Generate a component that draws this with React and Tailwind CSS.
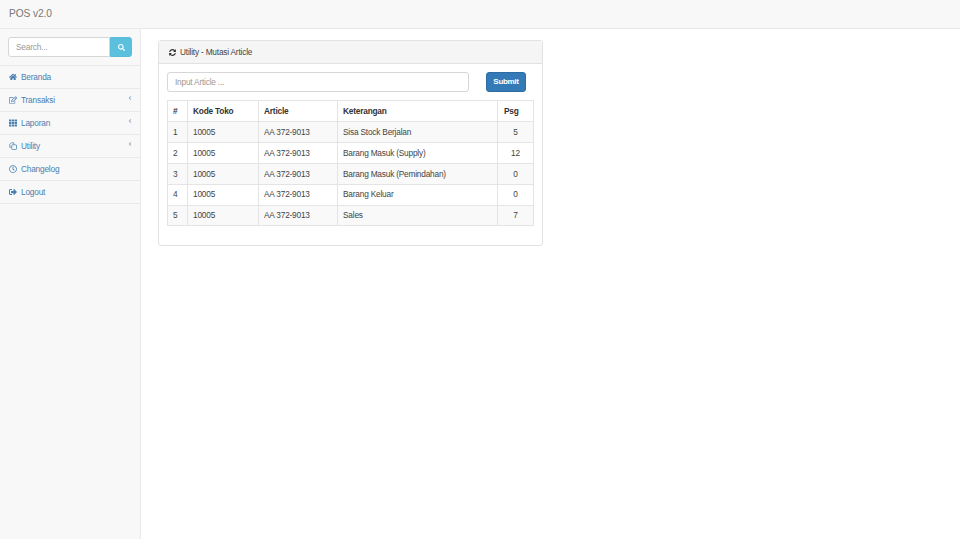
import { FaHome, FaRegEdit, FaTh, FaRegClock, FaSignOutAlt, FaSyncAlt, FaSearch, FaAngleLeft } from 'react-icons/fa';

function UtilityIcon({ className }) {
  return (
    <svg viewBox="0 0 16 16" fill="none" stroke="currentColor" strokeWidth="1.5" className={className}>
      <path d="M5 1.5 1.5 5v5.5H5" strokeLinejoin="round" />
      <path d="M5 1.5h4.5v3.5" strokeLinejoin="round" />
      <rect x="5.5" y="5.5" width="9.5" height="9.5" rx="1.5" />
    </svg>
  );
}

const menu = [
  { label: 'Beranda', icon: FaHome },
  { label: 'Transaksi', icon: FaRegEdit, sub: true },
  { label: 'Laporan', icon: FaTh, sub: true },
  { label: 'Utility', icon: UtilityIcon, sub: true },
  { label: 'Changelog', icon: FaRegClock },
  { label: 'Logout', icon: FaSignOutAlt },
];

const rows = [
  { no: 1, toko: '10005', article: 'AA 372-9013', ket: 'Sisa Stock Berjalan', psg: 5 },
  { no: 2, toko: '10005', article: 'AA 372-9013', ket: 'Barang Masuk (Supply)', psg: 12 },
  { no: 3, toko: '10005', article: 'AA 372-9013', ket: 'Barang Masuk (Pemindahan)', psg: 0 },
  { no: 4, toko: '10005', article: 'AA 372-9013', ket: 'Barang Keluar', psg: 0 },
  { no: 5, toko: '10005', article: 'AA 372-9013', ket: 'Sales', psg: 7 },
];

export default function App() {
  return (
    <div className="h-[539px] overflow-hidden bg-white font-['Liberation_Sans',Arial,sans-serif] text-[8.3px] tracking-[-0.2px] text-[#444]">
      {/* Navbar */}
      <div className="h-[29px] bg-[#f8f8f8] border-b border-[#e9e9e9] pl-[9px] flex items-center">
        <span className="text-[10.2px] tracking-[-0.1px] text-[#777]">POS v2.0</span>
      </div>

      <div className="flex h-[510px]">
        {/* Sidebar */}
        <div className="w-[141px] bg-[#f8f8f8] border-r border-[#e9e9e9]">
          <div className="h-[37px] px-[8px] pt-[8px] border-b border-[#e9e9e9]">
            <div className="flex w-[124px] h-[20px]">
              <input
                placeholder="Search..."
                className="w-[102px] h-full bg-white border border-[#d6d6d6] rounded-l-[3px] px-[7px] text-[8.3px] tracking-[-0.2px] placeholder:text-[#999] outline-none"
              />
              <button className="w-[22px] h-full bg-[#5bc0de] border border-[#5bbcd9] rounded-r-[3px] flex items-center justify-center text-white">
                <FaSearch className="w-[7px] h-[7px]" />
              </button>
            </div>
          </div>
          {menu.map((item) => (
            <div key={item.label} className="h-[23px] border-b border-[#e9e9e9] pl-[9px] pr-[7px] flex items-center text-[#4a7fb0]">
              <item.icon className="w-[8px] h-[8px] shrink-0" />
              <span className="ml-[4px]">{item.label}</span>
              {item.sub && <FaAngleLeft className="w-[6px] h-[6px] ml-auto -mt-[5px] text-[#8fa9c2]" />}
            </div>
          ))}
        </div>

        {/* Content */}
        <div className="flex-1 pl-[17px] pt-[11px]">
          <div className="w-[385px] h-[206px] border border-[#e2e2e2] rounded-[3px]">
            <div className="h-[23px] bg-[#f5f5f5] border-b border-[#e2e2e2] pl-[10px] flex items-center">
              <FaSyncAlt className="w-[7px] h-[7px] text-[#333]" />
              <span className="ml-[4px]">Utility - Mutasi Article</span>
            </div>
            <div className="pl-[8px] pr-[8px] pt-[8px]">
              <div className="flex items-start">
                <input
                  placeholder="Input Article ..."
                  className="w-[302px] h-[20px] bg-white border border-[#d6d6d6] rounded-[3px] px-[7px] text-[8.3px] tracking-[-0.2px] placeholder:text-[#999] outline-none"
                />
                <button className="ml-[17px] w-[40px] h-[20px] bg-[#337ab7] border border-[#2e6da4] rounded-[3px] text-white font-bold text-[8px] tracking-[-0.3px]">
                  Submit
                </button>
              </div>
              <table className="mt-[8px] w-[366px] table-fixed border-collapse">
                <colgroup>
                  <col className="w-[20px]" />
                  <col className="w-[71px]" />
                  <col className="w-[79px]" />
                  <col className="w-[160px]" />
                  <col className="w-[36px]" />
                </colgroup>
                <thead>
                  <tr className="h-[21px] font-bold text-[#333]">
                    <th className="border border-[#e4e4e4] px-[5px] text-left">#</th>
                    <th className="border border-[#e4e4e4] px-[5px] text-left">Kode Toko</th>
                    <th className="border border-[#e4e4e4] px-[5px] text-left">Article</th>
                    <th className="border border-[#e4e4e4] px-[5px] text-left">Keterangan</th>
                    <th className="border border-[#e4e4e4] pl-[6px] pr-[4px] text-left">Psg</th>
                  </tr>
                </thead>
                <tbody>
                  {rows.map((r) => (
                    <tr key={r.no} className={r.no % 2 === 1 ? 'h-[20.9px] bg-[#f9f9f9]' : 'h-[20.9px] bg-white'}>
                      <td className="border border-[#e4e4e4] px-[5px]">{r.no}</td>
                      <td className="border border-[#e4e4e4] px-[5px]">{r.toko}</td>
                      <td className="border border-[#e4e4e4] px-[5px]">{r.article}</td>
                      <td className="border border-[#e4e4e4] px-[5px]">{r.ket}</td>
                      <td className="border border-[#e4e4e4] px-[5px] text-center">{r.psg}</td>
                    </tr>
                  ))}
                </tbody>
              </table>
            </div>
          </div>
        </div>
      </div>
    </div>
  );
}
